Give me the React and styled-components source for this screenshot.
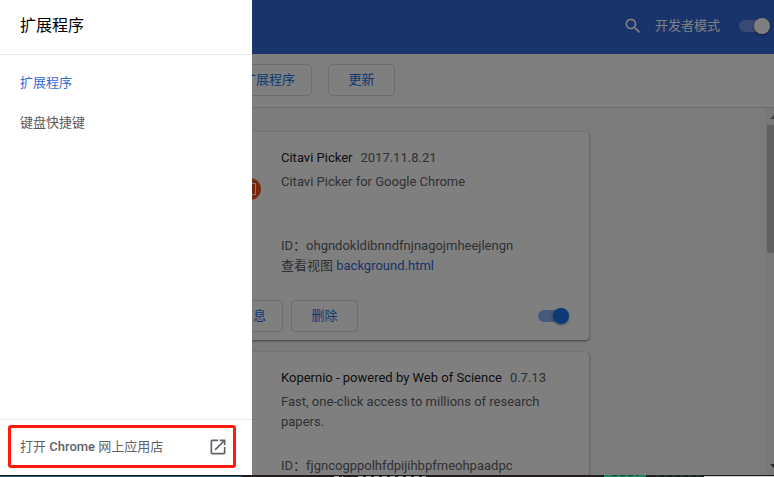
import React from "react";
import styled, { createGlobalStyle } from "styled-components";

const Global = createGlobalStyle`
  * { box-sizing: border-box; }
  body { margin: 0; overflow: hidden; font: 13px/20px Roboto, "Noto Sans CJK SC", sans-serif; color: #5f6368; background: #fff; }
`;

const Screen = styled.div`
  position: relative;
  width: 774px;
  height: 477px;
  overflow: hidden;
  display: flex;
  flex-direction: column;
`;
const Page = styled.div`
  height: 475px;
  flex: none;
  display: flex;
  flex-direction: column;
  overflow: hidden;
`;
const Header = styled.header`
  height: 54px;
  flex: none;
  background: #3367d6;
  color: #fff;
  display: flex;
  align-items: center;
  justify-content: flex-end;
  padding: 0 4px 3px 0;
`;
const SearchIcon = styled.svg`
  width: 20px;
  height: 20px;
  fill: #fff;
  margin-right: 12px;
`;
const ModeLabel = styled.span`
  margin-right: 19px;
`;
const Switch = styled.span`
  width: 31px;
  height: 16px;
  display: flex;
  align-items: center;
  justify-content: flex-end;
`;
const Track = styled.span`
  width: 23px;
  height: 12px;
  margin-right: -8px;
  border-radius: 6px;
  background: ${p => p.$color};
`;
const Knob = styled.span`
  width: 16px;
  height: 16px;
  flex: none;
  border-radius: 50%;
  background: ${p => p.$color};
  box-shadow: 0 1px 3px rgba(0, 0, 0, 0.4);
`;
const Toolbar = styled.div`
  height: 54px;
  flex: none;
  display: flex;
  gap: 16px;
  padding: 10px 0 0 200px;
  border-bottom: 1px solid #dadce0;
  background: #fff;
`;
const Button = styled.button`
  width: ${p => p.$width}px;
  height: 32px;
  flex: none;
  padding: 0 0 1px;
  font: inherit;
  color: #1a73e8;
  background: #fff;
  border: 1px solid #dadce0;
  border-radius: 4px;
`;
const Content = styled.div`
  flex: 1;
  min-height: 0;
  display: flex;
  justify-content: space-between;
  background: #f8f9fa;
`;
const Cards = styled.div`
  display: flex;
  flex-direction: column;
  gap: 12px;
  padding: 24px 0 0 189px;
`;
const Card = styled.article`
  width: 400px;
  height: 208px;
  flex: none;
  display: flex;
  flex-direction: column;
  background: #fff;
  border-radius: 4px;
  box-shadow: 0 1px 2px rgba(60, 64, 67, 0.5), 0 1px 3px 1px rgba(60, 64, 67, 0.15);
`;
const Info = styled.div`
  display: flex;
  padding: 16px 20px 0;
  height: 160px;
`;
const Badge = styled.svg`
  width: 22px;
  height: 22px;
  flex: none;
  margin: 30px 0 0 30px;
`;
const Details = styled.div`
  width: 288px;
  margin-left: auto;
`;
const Title = styled.div`
  display: flex;
  gap: 8px;
  margin-bottom: 4px;
`;
const Name = styled.span`
  color: #202124;
`;
const Description = styled.div`
  height: 60px;
  margin-bottom: 4px;
  padding-right: 20px;
`;
const Line = styled.div`
  white-space: nowrap;
`;
const Link = styled.a`
  color: #3367d6;
`;
const Actions = styled.div`
  display: flex;
  align-items: center;
  gap: 8px;
  padding: 8px 20px 8px 8px;
`;
const ActionSwitch = styled.span`
  display: flex;
  align-items: center;
  margin-left: auto;
`;
const Scrollbar = styled.div`
  width: 9px;
  background: #f1f1f1;
  display: flex;
  flex-direction: column;
`;
const Arrow = styled.svg`
  width: 9px;
  height: 17px;
  flex: none;
  fill: ${p => p.$color};
`;
const Thumb = styled.div`
  height: 128px;
  margin: 0 0 auto 2px;
  background: #c1c1c1;
`;
const Backdrop = styled.div`
  position: absolute;
  inset: 0 0 2px;
  background: rgba(0, 0, 0, 0.5);
`;
const Drawer = styled.aside`
  position: absolute;
  left: 0;
  top: 0;
  width: 252px;
  height: 475px;
  display: flex;
  flex-direction: column;
  background: #fff;
`;
const DrawerTitle = styled.div`
  height: 55px;
  padding: 15px 20px 0;
  font-size: 16px;
  line-height: 22px;
  color: #000;
  border-bottom: 1px solid #ebebeb;
`;
const Menu = styled.nav`
  flex: 1;
  display: flex;
  flex-direction: column;
  gap: 20px;
  padding: 18px 20px 0;
`;
const MenuItem = styled.a`
  color: ${p => (p.$active ? "#3367d6" : "#5a5a5a")};
`;
const Store = styled.div`
  height: 56px;
  padding: 5px 16px 7px 8px;
  border-top: 1px solid #ebebeb;
`;
const StoreLink = styled.a`
  height: 43px;
  display: flex;
  align-items: center;
  justify-content: space-between;
  padding: 1px 5px 0 9px;
  border: 3px solid #ff1a0d;
  border-radius: 3px;
`;
const Brand = styled.span`
  font-weight: 500;
`;
const OpenIcon = styled.svg`
  width: 20px;
  height: 20px;
  fill: #5f6368;
`;
const BottomStrip = styled.svg`
  width: 774px;
  height: 2px;
  flex: none;
  display: block;
`;

function Toggle({ track, knob }) {
  return (
    <Switch>
      <Track $color={track} />
      <Knob $color={knob} />
    </Switch>
  );
}

export default function App() {
  return (
    <Screen>
      <Global />
      <Page>
        <Header>
          <SearchIcon viewBox="0 0 24 24">
            <path d="M15.5 14h-.79l-.28-.27A6.47 6.47 0 0 0 16 9.5 6.5 6.5 0 1 0 9.5 16c1.61 0 3.09-.59 4.23-1.57l.27.28v.79l5 4.99L20.49 19l-4.99-5zm-6 0C7.01 14 5 11.99 5 9.5S7.01 5 9.5 5 14 7.01 14 9.5 11.99 14 9.5 14z" />
          </SearchIcon>
          <ModeLabel>开发者模式</ModeLabel>
          <Toggle track="rgba(255,255,255,0.3)" knob="#fff" />
        </Header>
        <Toolbar>
          <Button $width={112}>打包扩展程序</Button>
          <Button $width={67}>更新</Button>
        </Toolbar>
        <Content>
          <Cards>
            <Card>
              <Info>
                <Badge viewBox="0 0 22 22">
                  <circle cx="11" cy="11" r="11" fill="#f2511b" />
                  <rect x="6.5" y="5.5" width="10" height="11" fill="none" stroke="#fff" />
                </Badge>
                <Details>
                  <Title><Name>Citavi Picker</Name><span>2017.11.8.21</span></Title>
                  <Description>Citavi Picker for Google Chrome</Description>
                  <Line>ID：ohgndokldibnndfnjnagojmheejlengn</Line>
                  <Line>查看视图 <Link>background.html</Link></Line>
                </Details>
              </Info>
              <Actions>
                <Button $width={86}>详细信息</Button>
                <Button $width={67}>删除</Button>
                <ActionSwitch><Toggle track="#8ab4f8" knob="#1a73e8" /></ActionSwitch>
              </Actions>
            </Card>
            <Card>
              <Info>
                <Details>
                  <Title><Name>Kopernio - powered by Web of Science</Name><span>0.7.13</span></Title>
                  <Description>Fast, one-click access to millions of research papers.</Description>
                  <Line>ID：fjgncogppolhfdpijihbpfmeohpaadpc</Line>
                </Details>
              </Info>
            </Card>
          </Cards>
          <Scrollbar>
            <Arrow viewBox="0 0 9 17" $color="#8a8a8a"><path d="M5 11l4-4v4z" /></Arrow>
            <Thumb />
            <Arrow viewBox="0 0 9 17" $color="#505050"><path d="M5 6h4v4z" /></Arrow>
          </Scrollbar>
        </Content>
      </Page>
      <BottomStrip viewBox="0 0 774 2" shapeRendering="crispEdges">
        <rect width="774" height="2" fill="#211d1e" />
        <rect y="0.5" width="242" height="2" fill="#205b78" />
        <path d="M334 1.5h9M358 1.5h68" stroke="#aaa" strokeDasharray="5 3" />
        <rect x="604" width="42" height="2" fill="#168a5b" />
        <path d="M612 .5h26M656 .5h46" stroke="#1d4435" strokeDasharray="5 3" />
        <rect x="704" y="1" width="70" height="1" fill="#c9c9c9" />
      </BottomStrip>
      <Backdrop />
      <Drawer>
        <DrawerTitle>扩展程序</DrawerTitle>
        <Menu>
          <MenuItem $active>扩展程序</MenuItem>
          <MenuItem>键盘快捷键</MenuItem>
        </Menu>
        <Store>
          <StoreLink>
            <span>打开 <Brand>Chrome</Brand> 网上应用店</span>
            <OpenIcon viewBox="0 0 24 24">
              <path d="M19 19H5V5h7V3H5a2 2 0 0 0-2 2v14a2 2 0 0 0 2 2h14c1.1 0 2-.9 2-2v-7h-2v7zM14 3v2h3.59l-9.83 9.83 1.41 1.41L19 6.41V10h2V3h-7z" />
            </OpenIcon>
          </StoreLink>
        </Store>
      </Drawer>
    </Screen>
  );
}
